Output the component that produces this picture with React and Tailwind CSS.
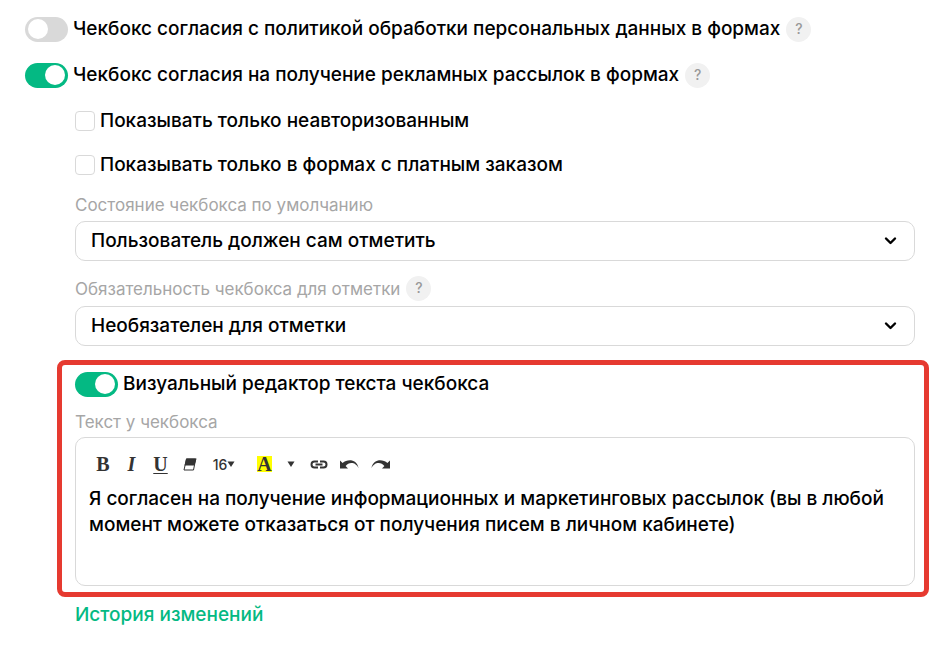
import { useState } from "react";

function Toggle({ label, checked, onChange, hint }) {
  return (
    <div className="flex items-center gap-[6px]">
      <label className="flex items-center gap-[5px] cursor-pointer">
        <input
          type="checkbox"
          role="switch"
          checked={checked}
          onChange={(e) => onChange(e.target.checked)}
          className="peer sr-only"
        />
        <span className="flex items-center shrink-0 w-[43px] h-[25px] p-[3px] rounded-full bg-[#d9d9d9] peer-checked:bg-[#04b983] peer-checked:justify-end peer-focus-visible:ring-2">
          <span className="w-5 h-5 rounded-full bg-white" />
        </span>
        <span className="leading-[26px]">{label}</span>
      </label>
      {hint && <Hint />}
    </div>
  );
}

function Hint() {
  return (
    <button
      type="button"
      aria-label="Подсказка"
      className="shrink-0 w-[25px] h-[25px] pb-px rounded-full bg-[#f1f1f1] text-[14px] leading-6 font-medium text-[#999999]"
    >
      ?
    </button>
  );
}

function Checkbox({ label }) {
  return (
    <label className="flex items-center gap-[5px] cursor-pointer">
      <input
        type="checkbox"
        className="appearance-none shrink-0 w-5 h-5 rounded border border-[#d9d9d9] bg-white checked:bg-[#04b983]"
      />
      <span className="leading-[26px]">{label}</span>
    </label>
  );
}

function FieldLabel({ htmlFor, children }) {
  return (
    <label htmlFor={htmlFor} className="block text-[17px] leading-6 font-normal text-[#a6a6a6]">
      {children}
    </label>
  );
}

function Select({ id, options }) {
  return (
    <div className="grid items-center">
      <select
        id={id}
        className="col-start-1 row-start-1 appearance-none w-full h-10 pl-[15px] pt-px pr-12 rounded-[10px] border border-[#d9d9d9] bg-white text-black"
      >
        {options.map((option) => (
          <option key={option}>{option}</option>
        ))}
      </select>
      <svg
        className="col-start-1 row-start-1 justify-self-end mr-[17px] pointer-events-none"
        width="14"
        height="10"
        viewBox="0 0 14 10"
        fill="none"
        stroke="black"
        strokeWidth="2.4"
        strokeLinecap="round"
        strokeLinejoin="round"
      >
        <path d="M2 2.500 6.500 7 11 2.500" />
      </svg>
    </div>
  );
}

function Toolbar() {
  return (
    <div className="flex items-center h-6 text-[#333333]">
      <button type="button" aria-label="Полужирный" className="w-7 font-['Liberation_Serif',serif] text-[20px] font-bold">
        B
      </button>
      <button type="button" aria-label="Курсив" className="w-[29px] font-['Liberation_Serif',serif] text-[20px] font-bold italic">
        I
      </button>
      <button type="button" aria-label="Подчёркнутый" className="w-[29px] font-['Liberation_Serif',serif] text-[20px] font-bold underline decoration-1 underline-offset-2">
        U
      </button>
      <button type="button" aria-label="Очистить формат" className="w-[29px] flex justify-center">
        <svg width="14" height="13" viewBox="0 0 14 13">
          <path d="M3.500 1h9.200L10.500 12H1z" fill="none" stroke="currentColor" strokeWidth="1" />
          <path d="M3.200.5h10.300L11.500 7.500H1.500z" fill="currentColor" />
        </svg>
      </button>
      <button type="button" aria-label="Размер шрифта" className="w-10 flex items-center justify-center text-[14px]">
        16
        <Caret />
      </button>
      <button type="button" aria-label="Цвет текста" className="w-[15px] h-4 ml-[13px] bg-[#ffff00] font-['Liberation_Serif',serif] text-[20px] leading-4 font-bold">
        A
      </button>
      <button type="button" aria-label="Выбрать цвет" className="w-7 ml-[5px] flex justify-center">
        <Caret />
      </button>
      <button type="button" aria-label="Ссылка" className="w-7 flex justify-center">
        <svg width="18" height="9" viewBox="0 0 18 9" fill="none" stroke="currentColor" strokeWidth="2">
          <path d="M8 1.500H4.500a3 3 0 0 0 0 6H8M10 1.500h3.500a3 3 0 0 1 0 6H10M5.500 4.500h7" />
        </svg>
      </button>
      <button type="button" aria-label="Отменить" className="w-8 flex justify-center">
        <UndoIcon />
      </button>
      <button type="button" aria-label="Повторить" className="w-[30px] flex justify-center">
        <UndoIcon className="-scale-x-100" />
      </button>
    </div>
  );
}

function Caret() {
  return (
    <svg width="8" height="6" viewBox="0 0 8 6" fill="currentColor">
      <path d="M.5.5h7L4 6z" />
    </svg>
  );
}

function UndoIcon({ className }) {
  return (
    <svg className={className} width="19" height="9" viewBox="0 0 19 9" fill="currentColor">
      <path d="M0 .5v8h8L5.600 6C7.500 3.600 10 2.600 12.600 3.100c2.500.5 4.500 2.300 5.900 4.900C18 4.200 15.500 1.200 12 .4 8.500-.2 5 .8 2.600 3z" />
    </svg>
  );
}

export default function App() {
  const [policy, setPolicy] = useState(false);
  const [mailing, setMailing] = useState(true);
  const [visual, setVisual] = useState(true);
  const [text, setText] = useState(
    "Я согласен на получение информационных и маркетинговых рассылок (вы в любой момент можете отказаться от получения писем в личном кабинете)"
  );

  return (
    <main className="pt-4 pb-5 bg-white font-['Inter','Noto_Sans',sans-serif] text-[19px] font-medium text-black">
      <div className="pl-[25px] flex flex-col gap-5">
        <Toggle
          label="Чекбокс согласия с политикой обработки персональных данных в формах"
          checked={policy}
          onChange={setPolicy}
          hint
        />
        <Toggle
          label="Чекбокс согласия на получение рекламных рассылок в формах"
          checked={mailing}
          onChange={setMailing}
          hint
        />
      </div>

      <div className="pl-[57px] pr-[13px]">
        <div className="pl-[18px] pr-[14px] pt-5">
          <div className="flex flex-col gap-[18px]">
            <Checkbox label="Показывать только неавторизованным" />
            <Checkbox label="Показывать только в формах с платным заказом" />
          </div>
          <div className="mt-[15px] mb-1">
            <FieldLabel htmlFor="state">Состояние чекбокса по умолчанию</FieldLabel>
          </div>
          <Select id="state" options={["Пользователь должен сам отметить", "Отмечен по умолчанию"]} />
          <div className="flex items-center gap-[6px] mt-[15px] mb-[5px]">
            <FieldLabel htmlFor="required">Обязательность чекбокса для отметки</FieldLabel>
            <Hint />
          </div>
          <Select id="required" options={["Необязателен для отметки", "Обязателен для отметки"]} />
        </div>

        <section className="mt-[14px] pt-[6px] pb-[6px] pl-[13px] pr-[9px] rounded-lg border-5 border-[#e63a30]">
          <Toggle label="Визуальный редактор текста чекбокса" checked={visual} onChange={setVisual} />
          <div className="mt-[13px] mb-[3px]">
            <FieldLabel htmlFor="text">Текст у чекбокса</FieldLabel>
          </div>
          <div className="pt-[14px] pb-2 px-[13px] rounded-[10px] border border-[#d9d9d9]">
            <Toolbar />
            <textarea
              id="text"
              rows={4}
              value={text}
              onChange={(e) => setText(e.target.value)}
              className="block w-full mt-[10px] h-[91px] resize-none overflow-hidden leading-[26px] outline-none"
            />
          </div>
        </section>

        <a href="#history" className="inline-block mt-[5px] ml-[18px] leading-[26px] text-[#04b983]">
          История изменений
        </a>
      </div>
    </main>
  );
}
